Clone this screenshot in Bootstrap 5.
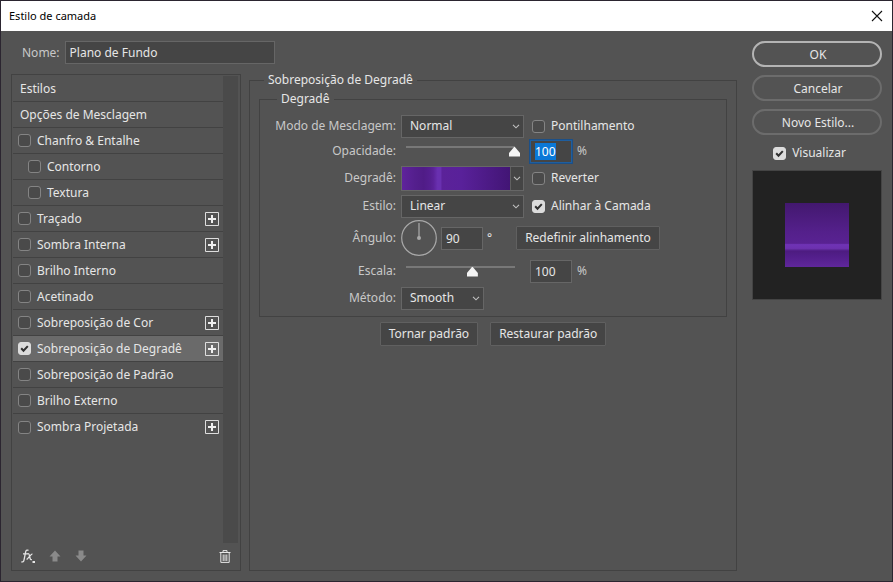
<!DOCTYPE html>
<html lang="pt-BR">
<head>
<meta charset="utf-8">
<meta name="viewport" content="width=device-width, initial-scale=1">
<title>Estilo de camada</title>
<link href="https://cdn.jsdelivr.net/npm/bootstrap@5.3.0/dist/css/bootstrap.min.css" rel="stylesheet">
<style>
  body { font-family: "Noto Sans", sans-serif; font-size: 12px; line-height: 16px; color: #e6e6e6; background: #535353; }
  .dialog { border: 1px solid #2b2530; }
  .titlebar { height: 30px; background: #fff; color: #000; font-size: 11px; padding: 0 9px 0 8px; }
  .plain { background: none; border: 0; padding: 0; color: inherit; line-height: 0; }
  .content { padding: 10px; gap: 15px; }
  .name-row { padding-left: 11px; gap: 5px; height: 23px; }
  .dim { color: #c8c8c8; }
  .field { background: #454545; border: 1px solid #666; border-radius: 0; color: #e6e6e6; font-size: 12px; line-height: 16px; height: 23px; padding: 0 4px; min-height: 0; }
  .field:focus { background-color: #454545; color: #fff; border-color: #1f5e9e; box-shadow: 0 0 0 1px #1c4f86; }
  .field::selection { background: #0a78d7; color: #fff; }
  .field-name { width: 210px; }
  .field-num { width: 42px; }
  .pick { padding: 0 20px 0 8px; background: #454545 url("data:image/svg+xml,%3Csvg xmlns='http://www.w3.org/2000/svg' viewBox='0 0 8 5'%3E%3Cpath d='M1 .8 4 3.8 7 .8' fill='none' stroke='%23c0c0c0' stroke-width='1.1'/%3E%3C/svg%3E") no-repeat right 3px center / 8px 5px; }
  .pick-short { width: 83px; }
  .styles-col { width: 230px; }
  .styles-panel { border: 1px solid #424242; margin-top: 10px; padding: 1px; }
  .styles-list { width: 210px; list-style: none; }
  .styles-item { height: 26px; border-bottom: 1px solid #424242; padding: 0 4px 0 5px; gap: 6px; }
  .styles-item.heading { padding-left: 7px; }
  .styles-item.nested { padding-left: 15px; }
  .styles-item.chosen { background: #6a6a6a; }
  .styles-item:last-child { border-bottom: 0; }
  .track { background: #4a4a4a; width: 15px; }
  .tools { height: 26px; padding: 0 8px; gap: 14px; }
  .tick { width: 13px; height: 13px; flex: none; margin: 0; border: 1px solid #848484; border-radius: 2px; background-color: #4a4a4a; }
  .tick:checked { border-color: #dcdcdc; background-color: #dcdcdc; background-size: 13px 13px; background-image: url("data:image/svg+xml,%3Csvg xmlns='http://www.w3.org/2000/svg' viewBox='0 0 13 13'%3E%3Cpath d='m3.2 6.3 2.3 2.5 4.3-4.7' fill='none' stroke='%23303030' stroke-width='2'/%3E%3C/svg%3E"); }
  .group { border: 1px solid #424242; min-width: 0; }
  .group > legend { float: none; width: auto; font-size: 12px; line-height: 16px; margin: 0; padding: 0 4px; }
  .group-outer { margin-top: 31px; padding: 3px 9px 0; }
  .group-outer > legend { margin-left: 5px; }
  .group-inner { padding: 6px 5px 5px 0; }
  .group-inner > legend { margin-left: 17px; }
  .options { display: grid; grid-template-columns: 136px 123px 1fr; column-gap: 5px; grid-template-rows: 26px 24px 30px 26px 38px 28px 26px; align-items: center; }
  .options > .dim { text-align: right; }
  .angle-cell { grid-column: 2 / 4; }
  .angle-cell .flatbtn { margin-left: 20px; }
  .extra { padding-left: 1px; gap: 5px; }
  .extra-check { padding-left: 3px; gap: 6px; }
  .flatbtn { background: #454545; border: 1px solid #606060; border-radius: 1px; color: #e6e6e6; font-size: 12px; line-height: 16px; padding: 3px 8px; white-space: nowrap; }
  .flatbtn:hover, .pill:hover { background: #4d4d4d; color: #fff; }
  .default-actions { margin-top: 5px; gap: 12px; }
  .slide { appearance: none; -webkit-appearance: none; width: 119px; height: 11px; margin: 0; background: none; display: block; }
  .slide::-webkit-slider-runnable-track { height: 11px; background: linear-gradient(#787878, #787878) no-repeat center top / 109px 2px; }
  .slide::-webkit-slider-thumb { appearance: none; -webkit-appearance: none; width: 11px; height: 10px; margin-top: 1px; background: #f4f4f4; clip-path: polygon(50% 0, 100% 65%, 100% 100%, 0 100%, 0 65%); }
  .swatch { height: 25px; border: 1px solid #666; }
  .swatch-fill { background: linear-gradient(90deg, #5f249c 0, #541f8d 12%, #501c87 20%, #551f90 26%, #5b2299 29%, #6930b0 33%, #6930b0 36%, #5b2299 37%, #59219a 55%, #421575 100%); }
  .swatch-more { width: 13px; background: #454545; border-left: 1px solid #606060; }
  .dial { width: 36px; height: 36px; flex: none; }
  .side { width: 130px; }
  .pill { height: 26px; border: 2px solid #6c6c6c; border-radius: 13px; color: #e6e6e6; font-size: 12px; line-height: 16px; padding: 2px 0 0 2px; margin-bottom: 8px; }
  .pill-main { border-color: #b4b4b4; }
  .show-row { margin-top: 2px; padding-right: 15px; gap: 6px; }
  .preview { height: 130px; background: #222; border: 1px solid #444; margin-top: 9px; }
  .preview-tile { width: 64px; height: 64px; background: linear-gradient(#43186f 0, #54208b 45%, #592292 63%, #6f33b5 65%, #6c31ae 71%, #4d1c80 75%, #521e8a 83%, #60279b 100%); }
</style>
<script src="https://cdn.jsdelivr.net/npm/bootstrap@5.3.0/dist/js/bootstrap.bundle.min.js"></script>
</head>
<body>
<svg class="d-none">
  <symbol id="plus" viewBox="0 0 14 14"><path d="M.5.5h13v13H.5z" fill="none" stroke="#ddd"/><path d="M7 3v8M3 7h8" stroke="#eee" stroke-width="2"/></symbol>
</svg>
<div class="dialog d-flex flex-column min-vh-100">
  <header class="titlebar d-flex align-items-center justify-content-between">
    <span>Estilo de camada</span>
    <button class="plain" type="button" aria-label="Fechar"><svg width="12" height="12" viewBox="0 0 12 12"><path d="m1 1 10 10M11 1 1 11" stroke="#111" stroke-width="1.1"/></svg></button>
  </header>

  <main class="content d-flex flex-grow-1">
    <div class="d-flex flex-grow-1 gap-2">
      <section class="styles-col d-flex flex-column flex-shrink-0">
        <div class="name-row d-flex align-items-center">
          <label class="dim" for="layerName">Nome:</label>
          <input class="form-control field field-name flex-shrink-0" id="layerName" value="Plano de Fundo">
        </div>
        <div class="styles-panel d-flex flex-column flex-grow-1">
          <div class="d-flex flex-grow-1">
            <ul class="styles-list m-0 p-0">
              <li class="styles-item heading d-flex align-items-center">Estilos</li>
              <li class="styles-item heading d-flex align-items-center">Opções de Mesclagem</li>
              <li class="styles-item d-flex align-items-center"><input class="form-check-input tick" type="checkbox" id="s1"><label for="s1">Chanfro &amp; Entalhe</label></li>
              <li class="styles-item nested d-flex align-items-center"><input class="form-check-input tick" type="checkbox" id="s2"><label for="s2">Contorno</label></li>
              <li class="styles-item nested d-flex align-items-center"><input class="form-check-input tick" type="checkbox" id="s3"><label for="s3">Textura</label></li>
              <li class="styles-item d-flex align-items-center"><input class="form-check-input tick" type="checkbox" id="s4"><label for="s4">Traçado</label><button class="plain ms-auto" type="button" aria-label="Adicionar Traçado"><svg width="14" height="14"><use href="#plus"/></svg></button></li>
              <li class="styles-item d-flex align-items-center"><input class="form-check-input tick" type="checkbox" id="s5"><label for="s5">Sombra Interna</label><button class="plain ms-auto" type="button" aria-label="Adicionar Sombra Interna"><svg width="14" height="14"><use href="#plus"/></svg></button></li>
              <li class="styles-item d-flex align-items-center"><input class="form-check-input tick" type="checkbox" id="s6"><label for="s6">Brilho Interno</label></li>
              <li class="styles-item d-flex align-items-center"><input class="form-check-input tick" type="checkbox" id="s7"><label for="s7">Acetinado</label></li>
              <li class="styles-item d-flex align-items-center"><input class="form-check-input tick" type="checkbox" id="s8"><label for="s8">Sobreposição de Cor</label><button class="plain ms-auto" type="button" aria-label="Adicionar Sobreposição de Cor"><svg width="14" height="14"><use href="#plus"/></svg></button></li>
              <li class="styles-item chosen d-flex align-items-center"><input class="form-check-input tick" type="checkbox" id="s9" checked><label for="s9">Sobreposição de Degradê</label><button class="plain ms-auto" type="button" aria-label="Adicionar Sobreposição de Degradê"><svg width="14" height="14"><use href="#plus"/></svg></button></li>
              <li class="styles-item d-flex align-items-center"><input class="form-check-input tick" type="checkbox" id="s10"><label for="s10">Sobreposição de Padrão</label></li>
              <li class="styles-item d-flex align-items-center"><input class="form-check-input tick" type="checkbox" id="s11"><label for="s11">Brilho Externo</label></li>
              <li class="styles-item d-flex align-items-center"><input class="form-check-input tick" type="checkbox" id="s12"><label for="s12">Sombra Projetada</label><button class="plain ms-auto" type="button" aria-label="Adicionar Sombra Projetada"><svg width="14" height="14"><use href="#plus"/></svg></button></li>
            </ul>
            <div class="track"></div>
          </div>
          <div class="tools d-flex align-items-center">
            <button class="plain" type="button" aria-label="Efeitos"><svg width="14" height="16" viewBox="0 0 14 16" fill="none" stroke="#e6e6e6" stroke-width="1.3"><path d="M7.5 2.3C5.6 1.5 4.9 2.6 4.6 4.2L3 12.2C2.7 13.7 1.8 14.3.3 13.8M2 5.8h4.8M6.4 5.8c1.2-.5 1.7.2 2 1.5l.7 3c.3 1.2.8 1.6 1.8 1.2M11.4 5.8C9.8 6 7.7 9.8 5.6 11.6"/><path d="M11.5 14h2.5" stroke-width="2"/></svg></button>
            <button class="plain" type="button" aria-label="Mover para cima"><svg width="12" height="12" viewBox="0 0 11 12"><path d="M5.5.5 11 6.5H8V11.5H3V6.5H0z" fill="#8a8a8a"/></svg></button>
            <button class="plain" type="button" aria-label="Mover para baixo"><svg width="12" height="12" viewBox="0 0 11 12"><path d="M5.5 11.5 11 5.5H8V.5H3V5.5H0z" fill="#8a8a8a"/></svg></button>
            <button class="plain ms-auto" type="button" aria-label="Excluir"><svg width="12" height="13" viewBox="0 0 12 13" fill="none" stroke="#e6e6e6"><path d="M.5 2.5h11M4 2V.6h4V2M1.8 3v9.4h8.4V3M4.2 4.5V11M6 4.5V11M7.8 4.5V11"/></svg></button>
          </div>
        </div>
      </section>

      <fieldset class="group group-outer flex-grow-1">
        <legend>Sobreposição de Degradê</legend>
        <fieldset class="group group-inner">
          <legend>Degradê</legend>
          <div class="options">
            <label class="dim" for="blend">Modo de Mesclagem:</label>
            <select class="form-select field pick" id="blend"><option>Normal</option></select>
            <div class="extra extra-check d-flex align-items-center"><input class="form-check-input tick" type="checkbox" id="dither"><label for="dither">Pontilhamento</label></div>

            <label class="dim" for="opacity">Opacidade:</label>
            <input class="slide" type="range" id="opacity" min="0" max="100" value="100">
            <div class="extra d-flex align-items-center"><input class="form-control field field-num" id="opacityValue" aria-label="Valor da opacidade" value="100"><span class="dim">%</span></div>

            <span class="dim">Degradê:</span>
            <div class="swatch d-flex">
              <button class="plain swatch-fill flex-grow-1" type="button" aria-label="Editar degradê"></button>
              <button class="plain swatch-more d-flex align-items-center justify-content-center" type="button" aria-label="Escolher degradê"><svg width="8" height="5" viewBox="0 0 8 5"><path d="M1 .8 4 3.8 7 .8" fill="none" stroke="#c0c0c0" stroke-width="1.1"/></svg></button>
            </div>
            <div class="extra extra-check d-flex align-items-center"><input class="form-check-input tick" type="checkbox" id="reverse"><label for="reverse">Reverter</label></div>

            <label class="dim" for="gradStyle">Estilo:</label>
            <select class="form-select field pick" id="gradStyle"><option>Linear</option></select>
            <div class="extra extra-check d-flex align-items-center"><input class="form-check-input tick" type="checkbox" id="align" checked><label for="align">Alinhar à Camada</label></div>

            <label class="dim" for="angle">Ângulo:</label>
            <div class="angle-cell d-flex align-items-center gap-1">
              <svg class="dial" viewBox="0 0 36 36"><circle cx="18" cy="18" r="17.3" fill="none" stroke="#a8a8a8" stroke-width="1.2"/><path d="M18 3v15" stroke="#a0a0a0" stroke-width="1.4"/><circle cx="18" cy="18" r="2" fill="#a8a8a8"/></svg>
              <input class="form-control field field-num flex-shrink-0" id="angle" value="90"><span>°</span>
              <button class="btn flatbtn" type="button">Redefinir alinhamento</button>
            </div>

            <label class="dim" for="scale">Escala:</label>
            <input class="slide" type="range" id="scale" min="0" max="100" value="61">
            <div class="extra d-flex align-items-center"><input class="form-control field field-num" aria-label="Valor da escala" value="100"><span class="dim">%</span></div>

            <label class="dim" for="method">Método:</label>
            <select class="form-select field pick pick-short" id="method"><option>Smooth</option></select>
          </div>
        </fieldset>
        <div class="default-actions d-flex justify-content-center">
          <button class="btn flatbtn" type="button">Tornar padrão</button>
          <button class="btn flatbtn" type="button">Restaurar padrão</button>
        </div>
      </fieldset>
    </div>

    <aside class="side d-flex flex-column flex-shrink-0">
      <button class="btn pill pill-main" type="button">OK</button>
      <button class="btn pill" type="button">Cancelar</button>
      <button class="btn pill" type="button">Novo Estilo...</button>
      <div class="show-row d-flex align-items-center justify-content-center"><input class="form-check-input tick" type="checkbox" id="show" checked><label for="show">Visualizar</label></div>
      <div class="preview d-flex align-items-center justify-content-center"><div class="preview-tile"></div></div>
    </aside>
  </main>
</div>
<script>
  document.getElementById('opacityValue').select();
</script>
</body>
</html>
